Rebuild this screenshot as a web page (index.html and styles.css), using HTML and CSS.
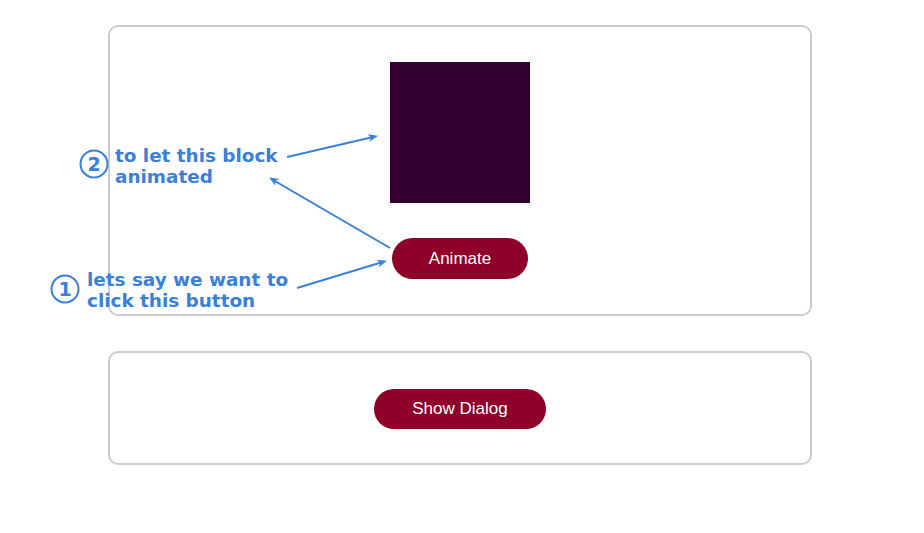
FILE: index.html
```html
<!DOCTYPE html>
<html>
<head>
<meta charset="utf-8">
<link rel="stylesheet" href="styles.css">
</head>
<body>
<main class="page">
  <section class="card card-anim">
    <div class="block"></div>
    <button class="btn btn-animate">Animate</button>
  </section>
  <section class="card card-dialog">
    <button class="btn btn-dialog">Show Dialog</button>
  </section>
</main>

<svg class="overlay" width="924" height="533" viewBox="0 0 924 533">
  <g stroke="#3a80d8" stroke-width="2" fill="none">
    <circle cx="94" cy="164" r="13.5"/>
    <circle cx="65" cy="289" r="13.5"/>
    <line x1="287" y1="157" x2="372" y2="137.2"/>
    <line x1="390" y1="248" x2="274" y2="180.5"/>
    <line x1="297" y1="288" x2="381" y2="262.5"/>
  </g>
  <g fill="#3a80d8">
    <path d="M0,0 L-10,-4 L-7,0 L-10,4 Z" transform="translate(378,135.8) rotate(-13.1)"/>
    <path d="M0,0 L-10,-4 L-7,0 L-10,4 Z" transform="translate(269,177.5) rotate(-149.7)"/>
    <path d="M0,0 L-10,-4 L-7,0 L-10,4 Z" transform="translate(387,260.7) rotate(-16.9)"/>
  </g>
</svg>
<div class="note num num-2">2</div>
<div class="note num num-1">1</div>
<div class="note text text-2">to let this block<br>animated</div>
<div class="note text text-1">lets say we want to<br>click this button</div>
</body>
</html>
```
FILE: styles.css
```css
html, body {
  margin: 0;
  padding: 0;
  background: #ffffff;
}
body {
  width: 924px;
  height: 533px;
  position: relative;
  overflow: hidden;
  font-family: "Liberation Sans", Arial, sans-serif;
}
.page {
  display: flex;
  flex-direction: column;
  gap: 35px;
  padding-top: 25px;
  padding-left: 108px;
  width: 704px;
}
.card {
  box-sizing: border-box;
  width: 704px;
  border: 2px solid #cccccc;
  border-radius: 10px;
  display: flex;
  flex-direction: column;
  align-items: center;
}
.card-anim {
  height: 291px;
  padding-top: 35px;
}
.card-dialog {
  height: 114px;
  justify-content: center;
  padding-top: 1px;
}
.block {
  width: 140px;
  height: 141px;
  background: #330030;
}
.btn {
  border: none;
  background: #8e0029;
  color: #ffffff;
  font-family: "Liberation Sans", Arial, sans-serif;
  font-size: 17px;
  border-radius: 21px;
  padding: 0;
}
.btn-animate {
  margin-top: 35px;
  width: 136px;
  height: 41px;
}
.btn-dialog {
  width: 172px;
  height: 40px;
}
.overlay {
  position: absolute;
  left: 0;
  top: 0;
  pointer-events: none;
}
.note {
  position: absolute;
  color: #3a80d8;
  font-family: "DejaVu Sans", sans-serif;
  font-weight: bold;
}
.num {
  width: 28px;
  text-align: center;
  font-size: 19px;
  line-height: 28px;
}
.num-2 { left: 80px; top: 150px; }
.num-1 { left: 51px; top: 275px; }
.text {
  font-size: 18.4px;
  line-height: 21px;
  white-space: nowrap;
}
.text-2 { left: 115px; top: 145px; }
.text-1 { left: 87px; top: 269px; }
```
